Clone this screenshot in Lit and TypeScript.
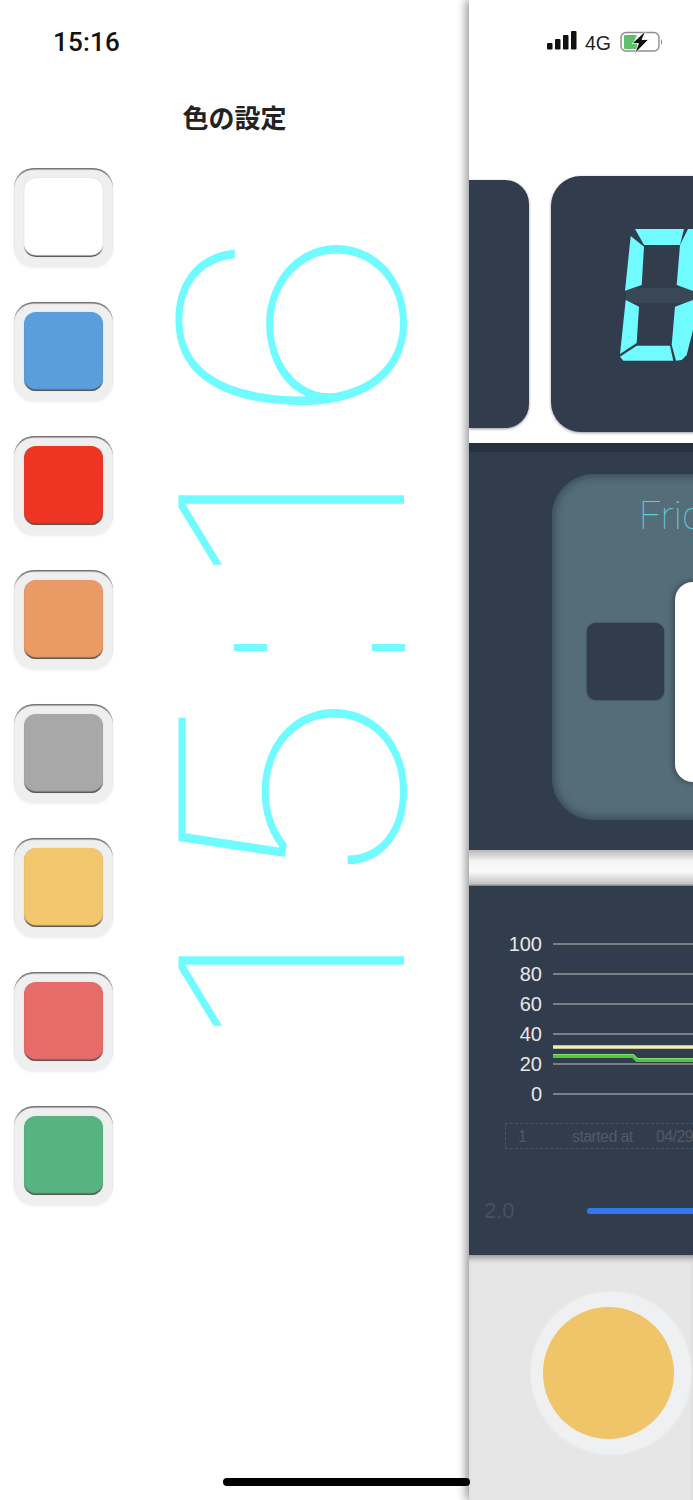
import { LitElement, html, css, svg } from "lit";
import { customElement } from "lit/decorators.js";

const COLORS = ["#ffffff", "#5a9fdc", "#ee3524", "#ea9a65", "#a8a8a8", "#f2c66c", "#e66b69", "#57b380"];
const TICKS = ["100", "80", "60", "40", "20", "0"];

@customElement("app-root")
export class AppRoot extends LitElement {
  static styles = css`
    :host { display: block; width: 693px; height: 1500px; overflow: hidden; position: relative; background: #fff; font-family: "Liberation Sans", "Noto Sans CJK JP", sans-serif; }
    .screen { display: flex; width: 693px; height: 1500px; }
    .drawer { width: 469px; flex: none; display: flex; flex-direction: column; background: #fff; }
    .time { height: 82px; box-sizing: border-box; padding: 27px 0 0 53px; font: 500 26px/30px Roboto, sans-serif; color: #111; letter-spacing: .2px; }
    .title { text-align: center; font: 700 26px/36px "Noto Sans CJK JP", sans-serif; color: #222; height: 86px; margin-top: 17px; box-sizing: border-box; margin-bottom: -17px; }
    .body { display: flex; }
    .swatches { display: flex; flex-direction: column; gap: 35px; padding-left: 14px; width: 99px; flex: none; }
    .sw { width: 99px; height: 99px; box-sizing: border-box; border-radius: 20px; background: #efefef; padding: 10px; box-shadow: inset 0 2px 1px -.5px #6d6d6d, 0 1px 3px rgba(0,0,0,.08); }
    .sw i { display: block; width: 79px; height: 79px; border-radius: 12px; box-shadow: inset 0 -2px 1px -.5px #555, 0 0 1px rgba(0,0,0,.2); }
    .clock { margin-left: 59px; height: 871px; width: 240px; display: flex; flex-direction: column-reverse; color: #6ffbff; font: 100 310px/240px Inter, sans-serif; }
    .g { writing-mode: vertical-rl; transform: scaleY(1.23) rotate(180deg); width: 240px; display: block; white-space: nowrap; flex: none; }
    .one { height: 122px; }
    .five { height: 167px; margin-bottom: 40px; }
    .six { height: 170px; margin-bottom: 43px; }
    .colon { height: 7px; width: 171px; margin-left: 62px; display: flex; justify-content: space-between; margin-top: 66px; margin-bottom: 59px; flex: none; }
    .colon b { width: 33px; height: 7px; background: #6ffbff; }
    .main { flex: 1; min-width: 0; display: flex; flex-direction: column; overflow: hidden; background: #fff; box-shadow: -3px 0 9px rgba(0,0,0,.42); position: relative; }
    .status { height: 176px; flex: none; box-sizing: border-box; padding: 30px 0 0 78px; display: flex; align-items: flex-start; gap: 8px; }
    .net { font: 19.5px/26px "Liberation Sans", sans-serif; color: #222; }
    .cards { display: flex; gap: 22px; height: 256px; flex: none; align-items: center; }
    .c1 { width: 60px; height: 248px; background: #313c4c; border-radius: 0 24px 24px 0; flex: none; box-shadow: 0 1px 3px rgba(0,0,0,.4); }
    .c2 { width: 300px; height: 256px; background: #313c4c; border-radius: 30px; flex: none; box-shadow: 0 1px 3px rgba(0,0,0,.4); padding: 53px 0 0 69px; box-sizing: border-box; }
    .band { height: 11px; flex: none; }
    .day { height: 407px; flex: none; background: #313c4c; border-top: 9px solid #27323f; box-sizing: border-box; padding: 22px 0 0 83px; }
    .panel { width: 300px; height: 346px; border-radius: 42px; background: #546d78; box-shadow: inset 0 0 9px 2px #37475a; display: flex; flex-direction: column; }
    .fri { font: 100 39px/46px Roboto, sans-serif; color: #62c9d6; padding: 19px 0 0 87px; height: 65px; box-sizing: border-box; white-space: nowrap; }
    .prow { display: flex; align-items: flex-start; margin-top: 43px; padding-left: 35px; gap: 11px; }
    .sq { width: 77px; height: 77px; border-radius: 9px; background: #313c4c; box-shadow: 0 0 2px #27323f; flex: none; margin-top: 41px; }
    .wh { width: 120px; height: 200px; border-radius: 18px; background: #fff; box-shadow: -1px 0 6px rgba(0,0,0,.4); flex: none; }
    .gap { height: 36px; flex: none; background: linear-gradient(#b9b9b9, #f4f4f4 30%, #fafafa 60%, #c2c2c2 94%, #777); }
    .chartcard { height: 369px; flex: none; background: #313c4c; box-sizing: border-box; padding: 43px 0 0 0; display: flex; flex-direction: column; }
    .chart { position: relative; display: flex; flex-direction: column; }
    .row { height: 30px; display: flex; align-items: center; }
    .row span { width: 73px; text-align: right; font-size: 20px; color: #e8e8e8; flex: none; }
    .row i { margin-left: 11px; flex: 1; height: 2px; background: #7b7f86; }
    .plot { position: absolute; left: 84px; top: 0; }
    .legend { margin: 14px 0 0 36px; width: 300px; height: 26px; box-sizing: border-box; border: 1px dashed #4a5564; display: flex; align-items: center; font-size: 16px; color: #4f5a69; letter-spacing: -.6px; white-space: nowrap; flex: none; padding-top: 2px; }
    .legend span:nth-child(1) { width: 66px; padding-left: 12px; box-sizing: border-box; }
    .legend span:nth-child(2) { width: 84px; }
    .scale { display: flex; align-items: center; margin: 49px 0 0 15px; }
    .scale span { font-size: 22px; color: #475161; width: 103px; flex: none; }
    .scale i { width: 200px; height: 6px; border-radius: 3px; background: #3376ee; flex: none; }
    .foot { flex: 1; background: #e6e6e6; box-shadow: inset 0 7px 7px -5px rgba(0,0,0,.45); padding: 37px 0 0 62px; }
    .ring { width: 160px; height: 162px; border-radius: 50%; background: #eff0f1; box-shadow: 0 0 3px rgba(255,255,255,.6); display: flex; align-items: center; justify-content: center; }
    .ring i { width: 131px; height: 132px; border-radius: 50%; background: #f0c469; margin-right: 6px; }
    .home { position: absolute; left: 223px; top: 1478px; width: 247px; height: 8px; border-radius: 4px; background: #000; }
  `;

  render() {
    return html`<div class="screen">
      <section class="drawer">
        <div class="time">15:16</div>
        <div class="title">色の設定</div>
        <div class="body">
          <div class="swatches">${COLORS.map((c) => html`<div class="sw"><i style="background:${c}"></i></div>`)}</div>
          <div class="clock">
            <span class="g one">1</span><span class="g five">5</span>
            <span class="colon" aria-label=":"><b></b><b></b></span>
            <span class="g one">1</span><span class="g six">6</span>
          </div>
        </div>
      </section>
      <section class="main">
        <div class="status">
          <svg width="30" height="20" viewBox="0 0 30 20"><g fill="#111"><rect x="0" y="13" width="5.5" height="6.5" rx="1"/><rect x="8" y="9" width="5.5" height="10.5" rx="1"/><rect x="16" y="5" width="5.5" height="14.5" rx="1"/><rect x="24" y="1" width="5.5" height="18.5" rx="1"/></g></svg>
          <span class="net">4G</span>
          <svg width="46" height="24" viewBox="0 0 46 24" style="margin-left:1px">
            <rect x="1" y="2.500" width="38" height="18.500" rx="5" fill="none" stroke="#8e8e8e" stroke-width="1.4"/>
            <path d="M5 5 H17 L14 11.500 H17 V19 H5 Q4 19 4 18 V6 Q4 5 5 5 Z" fill="#5cc16a"/>
            <path d="M26 .5 L12 13.500 H18.500 L14.500 24 L28.500 9.500 H22 Z" fill="#111" stroke="#fff" stroke-width=".8"/>
            <path d="M41 9 Q43.500 12 41 15 Z" fill="#8e8e8e"/>
          </svg>
        </div>
        <div class="cards">
          <div class="c1"></div>
          <div class="c2">
            <svg width="73" height="132" viewBox="0 0 73 132" style="display:block">
              <rect x="6" y="59" width="67" height="15" fill="#3a4757"/>
              <g fill="#6ffbff">
              <path d="M15 0 H64 L60 16 H24 Z"/>
              <path d="M10.700 7 L24 17.700 L21.700 56 L5 61.700 Z"/>
              <path d="M68 0 H73 V62 L56.700 56 L60 16 Z"/>
              <path d="M5.700 71 L19 77.700 L16.700 114 L0 125 Z"/>
              <path d="M0 127.700 L16.700 116.700 H50 L53.300 131.700 H3.300 Z"/>
              <path d="M73 71 L55 77.700 L51.700 116 L56 131.700 L61.700 131 L66.700 126 L73 101 Z"/>
            </g></svg>
          </div>
        </div>
        <div class="band"></div>
        <div class="day">
          <div class="panel">
            <div class="fri">Friday</div>
            <div class="prow"><div class="sq"></div><div class="wh"></div></div>
          </div>
        </div>
        <div class="gap"></div>
        <div class="chartcard">
          <div class="chart">
            ${TICKS.map((t) => html`<div class="row"><span>${t}</span><i></i></div>`)}
            <svg class="plot" width="140" height="180" viewBox="0 0 140 180">${svg`
              <path d="M0 118 H140" stroke="#f1efb4" stroke-width="3.4" fill="none"/>
              <path d="M0 127 H80 L84 131 H140" stroke="#4fc83f" stroke-width="4" fill="none"/>
              <path d="M0 125.500 H80 L84 129.500 H140" stroke="#86e070" stroke-width="1" fill="none"/>`}</svg>
          </div>
          <div class="legend"><span>1</span><span>started at</span><span>04/29</span></div>
          <div class="scale"><span>2.0</span><i></i></div>
        </div>
        <div class="foot"><div class="ring"><i></i></div></div>
      </section>
    </div>
    <div class="home"></div>`;
  }
}
